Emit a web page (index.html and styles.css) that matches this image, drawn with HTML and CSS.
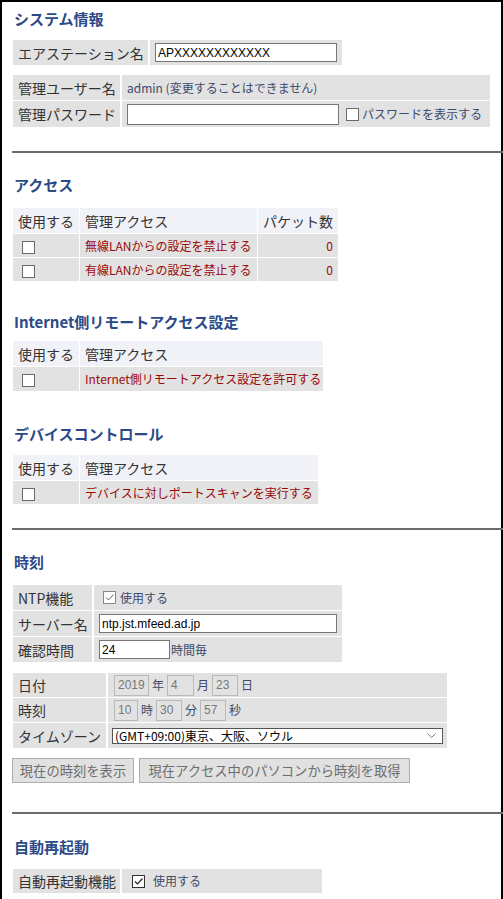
FILE: index.html
```html
<!DOCTYPE html>
<html lang="ja">
<head>
<meta charset="utf-8">
<title>設定</title>
<link rel="stylesheet" href="styles.css">
</head>
<body>
<div class="panel">
  <h2 class="h m7">システム情報</h2>
  <table class="t m10 w333">
    <colgroup><col class="c135"><col class="c192"></colgroup>
    <tr><td class="lbl h25">エアステーション名</td><td class="val"><input class="txt in-name" type="text" value="APXXXXXXXXXXXX"></td></tr>
  </table>
  <table class="t m8 w481">
    <colgroup><col class="c107"><col class="c368"></colgroup>
    <tr><td class="lbl h25">管理ユーザー名</td><td class="val"><span class="note">admin (変更することはできません)</span></td></tr>
    <tr><td class="lbl h26">管理パスワード</td><td class="val"><div class="row"><input class="txt in-pass" type="password"><span class="cb cb-pass"></span><span class="note">パスワードを表示する</span></div></td></tr>
  </table>

  <div class="rule m23"></div>

  <h2 class="h m22">アクセス</h2>
  <table class="t t1 m12 w327">
    <colgroup><col class="c66"><col class="c177"><col class="c80"></colgroup>
    <tr class="hd"><td class="h25">使用する</td><td>管理アクセス</td><td class="num">パケット数</td></tr>
    <tr><td class="h23 cbc"><span class="cb"></span></td><td class="red">無線LANからの設定を禁止する</td><td class="red num">0</td></tr>
    <tr><td class="h23 cbc"><span class="cb"></span></td><td class="red">有線LANからの設定を禁止する</td><td class="red num">0</td></tr>
  </table>

  <h2 class="h m30">Internet側リモートアクセス設定</h2>
  <table class="t t1 m8 w312">
    <colgroup><col class="c66"><col class="c243"></colgroup>
    <tr class="hd"><td class="h25">使用する</td><td>管理アクセス</td></tr>
    <tr><td class="h24 cbc"><span class="cb"></span></td><td class="red">Internet側リモートアクセス設定を許可する</td></tr>
  </table>

  <h2 class="h m32">デバイスコントロール</h2>
  <table class="t t1 m10 w307">
    <colgroup><col class="c66"><col class="c238"></colgroup>
    <tr class="hd"><td class="h25">使用する</td><td>管理アクセス</td></tr>
    <tr><td class="h23 cbc"><span class="cb"></span></td><td class="red">デバイスに対しポートスキャンを実行する</td></tr>
  </table>

  <div class="rule m23"></div>

  <h2 class="h m22">時刻</h2>
  <table class="t m12 w333">
    <colgroup><col class="c79"><col class="c248"></colgroup>
    <tr><td class="lbl h25">NTP機能</td><td class="val"><div class="row ntp"><span class="cb on"><svg width="11" height="11" viewBox="0 0 11 11"><polyline points="2,5.5 4.5,8 9.5,2.5" fill="none" stroke="#666" stroke-width="1"/></svg></span><span class="note">使用する</span></div></td></tr>
    <tr><td class="lbl h25">サーバー名</td><td class="val"><input class="txt in-srv" type="text" value="ntp.jst.mfeed.ad.jp"></td></tr>
    <tr><td class="lbl h25">確認時間</td><td class="val"><div class="row"><input class="txt in-int" type="text" value="24"><span class="note">時間毎</span></div></td></tr>
  </table>
  <table class="t m9 w438">
    <colgroup><col class="c93"><col class="c339"></colgroup>
    <tr><td class="lbl h24">日付</td><td class="val v6"><div class="row dt"><span class="dis w35">2019</span><span class="unit">年</span><span class="dis w27">4</span><span class="unit">月</span><span class="dis w26">23</span><span class="unit">日</span></div></td></tr>
    <tr><td class="lbl h24">時刻</td><td class="val v6"><div class="row dt"><span class="dis w24">10</span><span class="unit">時</span><span class="dis w26">30</span><span class="unit">分</span><span class="dis w26">57</span><span class="unit">秒</span></div></td></tr>
    <tr><td class="lbl h25">タイムゾーン</td><td class="val v4"><div class="sel"><span>(GMT+09:00)東京、大阪、ソウル</span><svg class="chev" width="9" height="6" viewBox="0 0 9 6"><polyline points="0.5,0.5 4.5,4.5 8.5,0.5" fill="none" stroke="#777" stroke-width="1"/></svg></div></td></tr>
  </table>
  <div class="btns m9">
    <button class="btn b1" type="button">現在の時刻を表示</button>
    <button class="btn b2" type="button">現在アクセス中のパソコンから時刻を取得</button>
  </div>

  <div class="rule m29"></div>

  <h2 class="h m23">自動再起動</h2>
  <table class="t m11 w313">
    <colgroup><col class="c107"><col class="c200"></colgroup>
    <tr><td class="lbl h24">自動再起動機能</td><td class="val v10"><div class="row"><span class="cb on dark"><svg width="11" height="11" viewBox="0 0 11 11"><polyline points="2,5.5 4.5,8 9.5,2.5" fill="none" stroke="#222" stroke-width="1.2"/></svg></span><span class="note n8">使用する</span></div></td></tr>
  </table>
</div>
</body>
</html>
```
FILE: styles.css
```css
* { box-sizing: border-box; }
body {
  margin: 0;
  background: #fff;
  font-family: "Noto Sans CJK JP", "Liberation Sans", sans-serif;
  color: #333;
}
.panel {
  width: 503px;
  min-height: 899px;
  border: 2px solid #000;
  border-bottom: 0;
}
.h {
  margin: 0 0 0 12px;
  font-size: 15px;
  line-height: 20px;
  font-weight: bold;
  color: #2b4a87;
}
.m7 { margin-top: 7px; }
.m8 { margin-top: 8px; }
.m9 { margin-top: 9px; }
.m10 { margin-top: 10px; }
.m11 { margin-top: 11px; }
.m12 { margin-top: 12px; }
.m22 { margin-top: 22px; }
.m23 { margin-top: 23px; }
.m29 { margin-top: 29px; }
.m30 { margin-top: 30px; }
.m32 { margin-top: 32px; }

.rule {
  height: 2px;
  background: #6b6b6b;
  margin-left: 10px;
  margin-right: -2px;
}

.t {
  border-collapse: separate;
  border-spacing: 2px 1px;
  table-layout: fixed;
  margin-left: 9px;
}
.t1 { border-spacing: 1px; margin-left: 10px; }
.w333 { width: 333px; }
.w481 { width: 481px; }
.w327 { width: 327px; }
.w312 { width: 312px; }
.w307 { width: 307px; }
.w438 { width: 438px; }
.w313 { width: 313px; }
.c66 { width: 66px; }
.c79 { width: 79px; }
.c80 { width: 80px; }
.c93 { width: 93px; }
.c107 { width: 107px; }
.c135 { width: 135px; }
.c177 { width: 177px; }
.c192 { width: 192px; }
.c200 { width: 200px; }
.c238 { width: 238px; }
.c243 { width: 243px; }
.c248 { width: 248px; }
.c339 { width: 339px; }
.c368 { width: 368px; }

.t td {
  box-sizing: content-box;
  background: #e2e2e2;
  padding: 0 5px;
  font-size: 14px;
  line-height: 16px;
  color: #333;
  white-space: nowrap;
  vertical-align: middle;
  overflow: hidden;
}
.t .hd td { background: #f1f2f8; }
.h23 { height: 23px; }
.h24 { height: 24px; }
.h25 { height: 25px; }
.h26 { height: 26px; }
.t td.num { text-align: right; }
.t td.red { font-size: 12px; color: #990808; }
.t td.cbc { padding-left: 9px; }
.t td.v4 { padding-left: 4px; }
.t td.v6 { padding-left: 6px; }
.t td.v10 { padding-left: 10px; }

.row { display: flex; align-items: center; }
.note { font-size: 12px; color: #3c4a6c; line-height: 16px; }
.n8 { margin-left: 8px; }

.txt {
  font-family: "Liberation Sans", sans-serif;
  font-size: 12px;
  color: #000;
  border: 1px solid #767676;
  background: #fff;
  padding: 0 2px;
  margin: 0;
  outline: none;
  border-radius: 0;
}
.in-name { width: 182px; height: 19px; }
.in-pass { width: 212px; height: 21px; }
.in-srv { width: 238px; height: 19px; }
.in-int { width: 71px; height: 19px; margin-right: 1px; }

.cb {
  display: inline-flex;
  align-items: center;
  justify-content: center;
  width: 13px;
  height: 13px;
  border: 1px solid #6a6a6a;
  background: #fff;
  flex: none;
  vertical-align: middle;
}
.cb-pass { margin: 0 3px 0 7px; }
.cb.on { border-color: #888; }
.cb.dark { border-color: #333; }
.ntp { padding-left: 4px; }
.ntp .cb { margin-right: 4px; }

.dt { gap: 0; }
.dis {
  display: inline-block;
  height: 21px;
  border: 1px solid #b9b9b9;
  font-family: "Liberation Sans", sans-serif;
  font-size: 12px;
  line-height: 19px;
  color: #777;
  padding-left: 3px;
}
.w24 { width: 24px; }
.w26 { width: 26px; }
.w27 { width: 27px; }
.w35 { width: 35px; }
.unit {
  font-size: 12px;
  color: #3c4a6c;
  margin: 0 3px 0 3px;
}

.sel {
  position: relative;
  width: 331px;
  height: 16px;
  border: 1px solid #555;
  background: #fff;
  font-size: 12px;
  line-height: 14px;
  color: #000;
  padding-left: 2px;
  display: flex;
  align-items: center;
}
.chev { position: absolute; right: 6px; top: 4px; }

.btns { display: flex; gap: 5px; margin-left: 10px; }
.btn {
  height: 25px;
  margin: 0;
  padding: 0;
  border: 1px solid #adadad;
  background: #e1e1e1;
  color: #6d6d6d;
  font-family: "Noto Sans CJK JP", sans-serif;
  font-size: 13.3px;
  line-height: 23px;
  border-radius: 0;
}
.b1 { width: 122px; }
.b2 { width: 271px; }
```
